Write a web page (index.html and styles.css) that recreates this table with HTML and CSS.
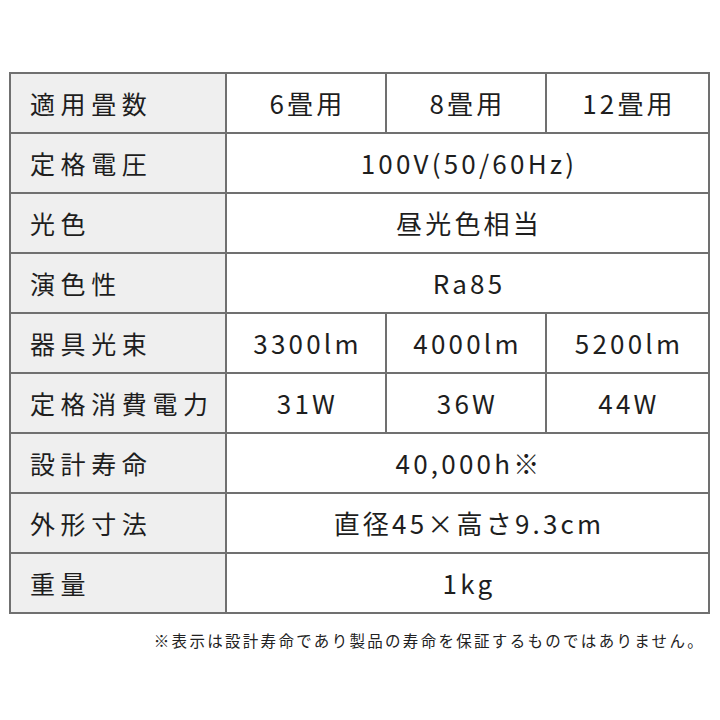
FILE: index.html
```html
<!DOCTYPE html>
<html lang="ja">
<head>
<meta charset="utf-8">
<link rel="stylesheet" href="styles.css">
</head>
<body>
<div class="page">
  <table class="spec">
    <colgroup>
      <col class="c-label">
      <col class="c-val">
      <col class="c-val">
      <col>
    </colgroup>
    <tbody>
      <tr><th>適用畳数</th><td>6畳用</td><td>8畳用</td><td>12畳用</td></tr>
      <tr><th>定格電圧</th><td colspan="3">100V(50/60Hz)</td></tr>
      <tr><th>光色</th><td colspan="3">昼光色相当</td></tr>
      <tr><th>演色性</th><td colspan="3">Ra85</td></tr>
      <tr><th>器具光束</th><td>3300lm</td><td>4000lm</td><td>5200lm</td></tr>
      <tr><th>定格消費電力</th><td>31W</td><td>36W</td><td>44W</td></tr>
      <tr><th>設計寿命</th><td colspan="3">40,000h※</td></tr>
      <tr><th>外形寸法</th><td colspan="3">直径45×高さ9.3cm</td></tr>
      <tr><th>重量</th><td colspan="3">1kg</td></tr>
    </tbody>
  </table>
  <p class="note">※表示は設計寿命であり製品の寿命を保証するものではありません。</p>
</div>
</body>
</html>
```
FILE: styles.css
```css
html, body {
  margin: 0;
  padding: 0;
  background: #ffffff;
}
.page {
  width: 720px;
  height: 720px;
  padding: 72px 10px 0 9px;
  box-sizing: border-box;
  font-family: "Noto Sans CJK JP", "Noto Sans", sans-serif;
  color: #1e1e1e;
}
.spec {
  width: 701px;
  border-collapse: collapse;
  table-layout: fixed;
  border: 2px solid #707070;
}
.c-label { width: 216px; }
.c-val { width: 160px; }
.spec tr { height: 60px; }
.spec th, .spec td {
  border: 2px solid #707070;
  padding: 0;
  font-weight: 400;
  line-height: 1;
  vertical-align: middle;
}
.spec th {
  background: #efefef;
  text-align: left;
  padding-left: 19px;
  font-size: 25px;
  letter-spacing: 5.6px;
}
.spec td {
  text-align: center;
  font-size: 26px;
  letter-spacing: 3.2px;
  padding-left: 3px;
}
.note {
  margin: 16px 5px 0 0;
  text-align: right;
  font-size: 15.5px;
  letter-spacing: 2.3px;
  color: #222222;
  line-height: 20px;
}
```
